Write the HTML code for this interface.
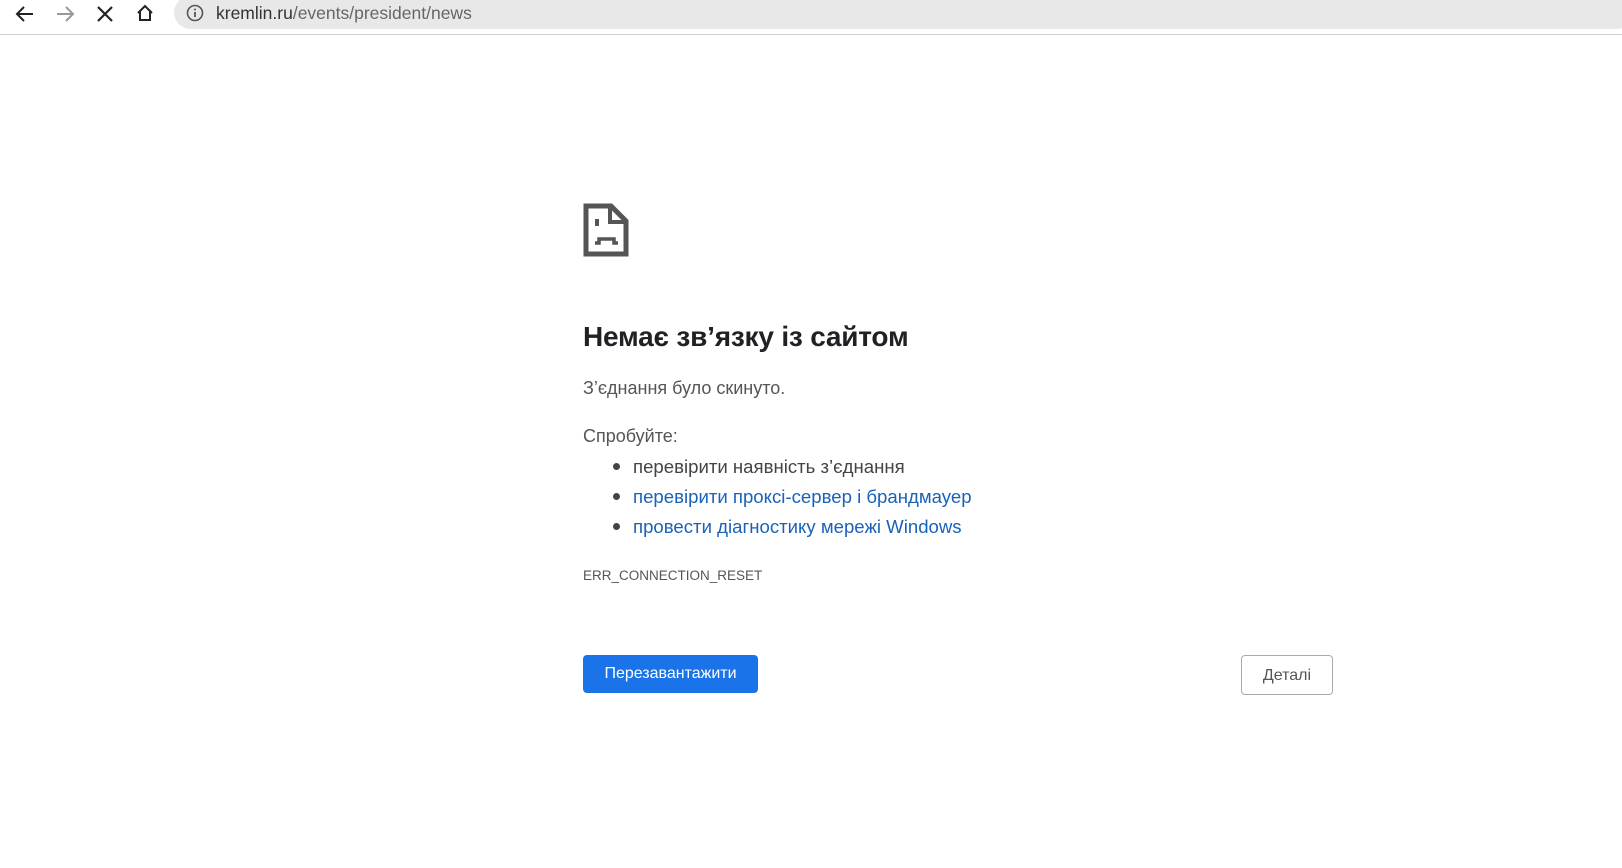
<!DOCTYPE html>
<html><head><meta charset="utf-8"><style>
body{margin:0;width:1622px;height:868px;background:#fff;font-family:"Liberation Sans","DejaVu Sans",sans-serif;position:relative;overflow:hidden}
.bar{position:absolute;left:0;top:0;width:1622px;height:34px;border-bottom:1px solid #d0d0d0;background:#fff}
.url{position:absolute;left:174px;top:-4px;width:1460px;height:33px;background:#e8e8e8;border-radius:17px}
.url span{position:absolute;left:42px;top:7px;font-size:17.5px;color:#333}
.ab{position:absolute}
h1{position:absolute;left:583px;top:321px;margin:0;font-size:28px;font-weight:bold;color:#202124;letter-spacing:-0.2px}
.t{position:absolute;left:583px;font-size:18px;color:#555}
.li{position:absolute;left:633px;font-size:18.6px;color:#444}
.li.a{color:#1a62b8}
.dot{position:absolute;left:613px;width:7px;height:7px;border-radius:50%;background:#444}
.btn{position:absolute;left:583px;top:655px;width:175px;height:38px;background:#1a73e8;border-radius:4px;color:#fff;font-size:16px;text-align:center;line-height:38px}
.det{position:absolute;left:1241px;top:655px;width:92px;height:40px;border:1px solid #aaa;border-radius:4px;color:#555;font-size:16px;text-align:center;line-height:40px;box-sizing:border-box}
</style></head><body>
<div class="bar">
<svg class="ab" style="left:14px;top:3px" width="22" height="22" viewBox="0 0 22 22"><path d="M19 11H4M10 4L3 11L10 18" stroke="#222" stroke-width="2" fill="none"/></svg>
<svg class="ab" style="left:54px;top:3px" width="22" height="22" viewBox="0 0 22 22"><path d="M3 11H18M12 4L19 11L12 18" stroke="#999" stroke-width="2" fill="none"/></svg>
<svg class="ab" style="left:95px;top:4px" width="20" height="20" viewBox="0 0 20 20"><path d="M3 3L17 17M17 3L3 17" stroke="#222" stroke-width="2.2"/></svg>
<svg class="ab" style="left:135px;top:3px" width="20" height="20" viewBox="0 0 20 20"><path d="M3 10L10 3L17 10M5 8V17H15V8" stroke="#222" stroke-width="2" fill="none"/></svg>
<div class="url"><svg class="ab" style="left:12px;top:8px" width="18" height="18" viewBox="0 0 18 18"><circle cx="9" cy="9" r="7.5" stroke="#555" stroke-width="1.6" fill="none"/><path d="M9 8V13" stroke="#555" stroke-width="1.8"/><circle cx="9" cy="5.5" r="1" fill="#555"/></svg><span>kremlin.ru<span style="position:static;color:#666">/events/president/news</span></span></div>
</div>
<svg class="ab" style="left:583px;top:203px" width="46" height="54" viewBox="0 0 46 54"><path d="M3 3H28L43 18V51H3Z" stroke="#555" stroke-width="5" fill="none" stroke-linejoin="miter"/><path d="M27 3V19H43" stroke="#555" stroke-width="4" fill="none"/><rect x="12" y="16" width="4" height="7" fill="#555"/><path d="M12 40H16V36H31V40H35" stroke="#555" stroke-width="3.5" fill="none"/></svg>
<h1>Немає зв’язку із сайтом</h1>
<div class="t" style="top:378px">З’єднання було скинуто.</div>
<div class="t" style="top:426px">Спробуйте:</div>
<div class="dot" style="top:463px"></div><div class="li" style="top:456px">перевірити наявність з’єднання</div>
<div class="dot" style="top:493px"></div><div class="li a" style="top:486px">перевірити проксі-сервер і брандмауер</div>
<div class="dot" style="top:523px"></div><div class="li a" style="top:516px">провести діагностику мережі Windows</div>
<div class="t" style="top:568px;font-size:13.5px;color:#555">ERR_CONNECTION_RESET</div>
<div class="btn">Перезавантажити</div>
<div class="det">Деталі</div>
</body></html>
